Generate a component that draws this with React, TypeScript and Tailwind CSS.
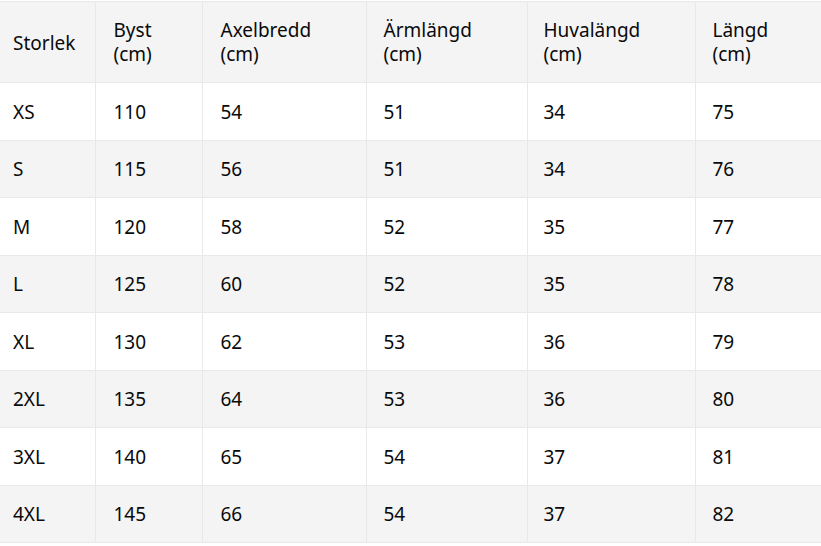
import React from "react";

const rows = [
  ["XS", "110", "54", "51", "34", "75"],
  ["S", "115", "56", "51", "34", "76"],
  ["M", "120", "58", "52", "35", "77"],
  ["L", "125", "60", "52", "35", "78"],
  ["XL", "130", "62", "53", "36", "79"],
  ["2XL", "135", "64", "53", "36", "80"],
  ["3XL", "140", "65", "54", "37", "81"],
  ["4XL", "145", "66", "54", "37", "82"],
];

const widths = ["w-[95px]", "w-[107px]", "w-[164px]", "w-[161px]", "w-[168px]", "w-[126px]"];
const pads = ["pl-[13px]", "pl-[18px]", "pl-[18px]", "pl-[17px]", "pl-[16px]", "pl-[17px]"];

export default function App() {
  return (
    <div className="w-[821px] h-[546px] bg-white overflow-hidden pt-px" style={{ fontFamily: '"Noto Sans", "Open Sans", sans-serif' }}>
      <table className="table-fixed border-collapse w-[821px] text-[19px] text-[#0a0a0a] leading-[24px]">
        <colgroup>
          {widths.map((w, i) => (
            <col key={i} className={w} />
          ))}
        </colgroup>
        <thead>
          <tr className="bg-[#f4f4f4] h-[81px]">
            {["Storlek", "Byst (cm)", "Axelbredd (cm)", "Ärmlängd (cm)", "Huvalängd (cm)", "Längd (cm)"].map((h, i) => {
              const parts = h.split(" ");
              return (
                <th
                  key={i}
                  className={`font-normal text-left align-middle border border-[#e9e9e9] ${i === 0 ? "border-l-0" : ""} ${pads[i]}`}
                >
                  {parts.length > 1 ? (
                    <>
                      {parts[0]}
                      <br />
                      {parts[1]}
                    </>
                  ) : (
                    <span className="relative top-[1px]">{parts[0]}</span>
                  )}
                </th>
              );
            })}
          </tr>
        </thead>
        <tbody>
          {rows.map((r, ri) => (
            <tr key={ri} className={`${ri % 2 === 1 ? "bg-[#f4f4f4]" : "bg-white"} ${ri % 2 === 0 ? "h-[58px]" : "h-[57px]"}`}>
              {r.map((c, ci) => (
                <td
                  key={ci}
                  className={`align-middle border border-[#e9e9e9] ${ci === 0 ? "border-l-0" : ""} ${pads[ci]}`}
                >
                  {c}
                </td>
              ))}
            </tr>
          ))}
        </tbody>
      </table>
    </div>
  );
}
